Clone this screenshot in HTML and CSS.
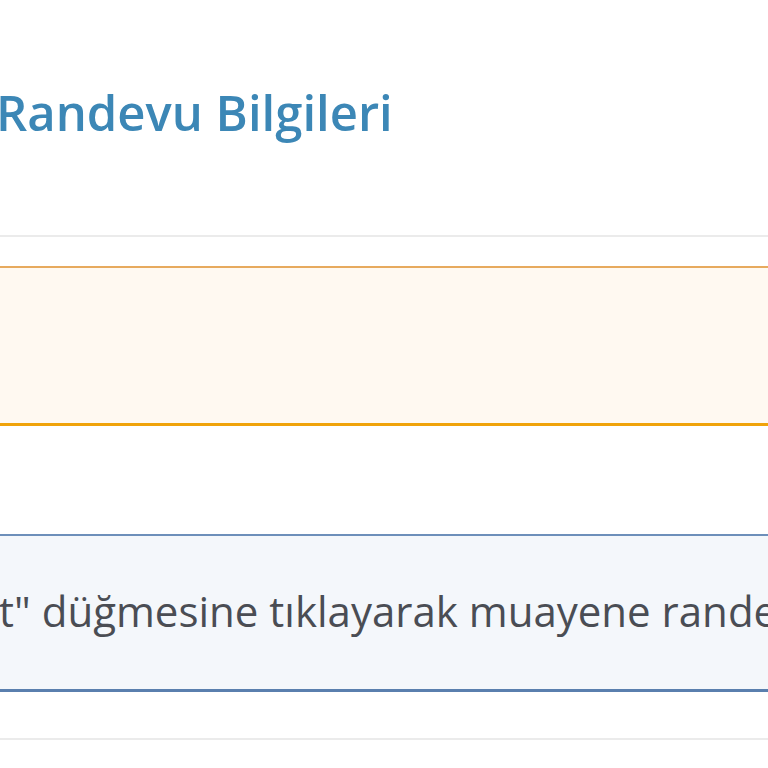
FILE: index.html
```html
<!DOCTYPE html>
<html lang="tr">
<head>
<meta charset="utf-8">
<title>Randevu Bilgileri</title>
<link rel="stylesheet" href="styles.css">
</head>
<body>
<div class="panel">
  <div class="panel-head">
    <h2 class="title">Randevu Bilgileri</h2>
  </div>
  <div class="panel-body">
    <div class="alert alert-warning"></div>
    <div class="alert alert-info">
      <p class="msg">"Kaydet" düğmesine tıklayarak muayene randevunuzu oluşturabilirsiniz.</p>
    </div>
  </div>
  <div class="panel-foot"></div>
</div>
</body>
</html>
```

FILE: styles.css
```css
html, body {
  margin: 0;
  padding: 0;
  background: #ffffff;
  overflow: hidden;
}

body {
  font-family: "Open Sans", Lato, "DejaVu Sans", sans-serif;
  color: #4a4a4a;
}

.panel {
  margin: 0 -40px;
}

.panel-head {
  padding: 79px 40px 90px 36px;
  border-bottom: 2px solid #ebebeb;
}

.title {
  margin: 0;
  font-size: 49px;
  line-height: 66px;
  font-weight: 600;
  color: #3c87b6;
}

.panel-body {
  padding-top: 29px;
  display: flex;
  flex-direction: column;
  gap: 108px;
}

.alert {
  box-sizing: border-box;
  overflow: hidden;
}

.alert-warning {
  height: 160px;
  background: #fff9f1;
  border-top: 2px solid #e7aa5e;
  border-bottom: 3px solid #f0a30a;
}

.alert-info {
  height: 158px;
  background: #f4f7fb;
  border-top: 2px solid #6d8fba;
  border-bottom: 3px solid #5a7fae;
  padding-top: 47px;
}

.msg {
  margin: 0;
  font-size: 42px;
  line-height: 56px;
  white-space: nowrap;
  text-indent: -97px;
  color: #4a4d54;
}

.panel-foot {
  margin-top: 46px;
  border-top: 2px solid #ebebeb;
  height: 40px;
}
```
